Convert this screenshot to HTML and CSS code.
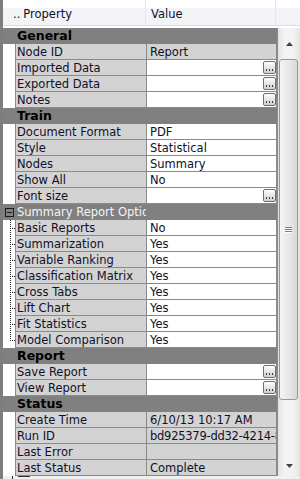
FILE: index.html
```html
<!DOCTYPE html>
<html>
<head>
<meta charset="utf-8">
<link rel="stylesheet" href="styles.css">
</head>
<body>
<div class="pg">
  <div class="header">
    <div class="hprop"><span class="hdots">..</span>Property</div>
    <div class="hval">Value</div>
    <div class="hcorner"></div>
  </div>
  <div class="body">
    <div class="rows">
      <div class="cat">General</div>
      <div class="row"><div class="ind"></div><div class="p">Node ID</div><div class="v ro">Report</div></div>
      <div class="row"><div class="ind"></div><div class="p">Imported Data</div><div class="v"><span class="val"></span><span class="btn"><svg width="11" height="11" viewBox="0 0 11 11"><rect x="2" y="7" width="1" height="2" fill="#1f3a7a"/><rect x="5" y="7" width="1" height="2" fill="#1f3a7a"/><rect x="8" y="7" width="1" height="2" fill="#1f3a7a"/></svg></span></div></div>
      <div class="row"><div class="ind"></div><div class="p">Exported Data</div><div class="v"><span class="val"></span><span class="btn"><svg width="11" height="11" viewBox="0 0 11 11"><rect x="2" y="7" width="1" height="2" fill="#1f3a7a"/><rect x="5" y="7" width="1" height="2" fill="#1f3a7a"/><rect x="8" y="7" width="1" height="2" fill="#1f3a7a"/></svg></span></div></div>
      <div class="row"><div class="ind"></div><div class="p">Notes</div><div class="v"><span class="val"></span><span class="btn"><svg width="11" height="11" viewBox="0 0 11 11"><rect x="2" y="7" width="1" height="2" fill="#1f3a7a"/><rect x="5" y="7" width="1" height="2" fill="#1f3a7a"/><rect x="8" y="7" width="1" height="2" fill="#1f3a7a"/></svg></span></div></div>
      <div class="cat">Train</div>
      <div class="row"><div class="ind"></div><div class="p">Document Format</div><div class="v">PDF</div></div>
      <div class="row"><div class="ind"></div><div class="p">Style</div><div class="v">Statistical</div></div>
      <div class="row"><div class="ind"></div><div class="p">Nodes</div><div class="v">Summary</div></div>
      <div class="row"><div class="ind"></div><div class="p">Show All</div><div class="v">No</div></div>
      <div class="row"><div class="ind"></div><div class="p">Font size</div><div class="v"><span class="val"></span><span class="btn"><svg width="11" height="11" viewBox="0 0 11 11"><rect x="2" y="7" width="1" height="2" fill="#1f3a7a"/><rect x="5" y="7" width="1" height="2" fill="#1f3a7a"/><rect x="8" y="7" width="1" height="2" fill="#1f3a7a"/></svg></span></div></div>
      <div class="subcat"><div class="ind"><svg class="box" width="9" height="9" viewBox="0 0 9 9"><rect x="0.5" y="0.5" width="8" height="8" fill="none" stroke="#1a1a1a"/><rect x="2" y="4" width="5" height="1" fill="#1a1a1a"/></svg></div><div class="p">Summary Report Options</div></div>
      <div class="row"><div class="ind tree"></div><div class="p">Basic Reports</div><div class="v">No</div></div>
      <div class="row"><div class="ind tree"></div><div class="p">Summarization</div><div class="v">Yes</div></div>
      <div class="row"><div class="ind tree"></div><div class="p">Variable Ranking</div><div class="v">Yes</div></div>
      <div class="row"><div class="ind tree"></div><div class="p">Classification Matrix</div><div class="v">Yes</div></div>
      <div class="row"><div class="ind tree"></div><div class="p">Cross Tabs</div><div class="v">Yes</div></div>
      <div class="row"><div class="ind tree"></div><div class="p">Lift Chart</div><div class="v">Yes</div></div>
      <div class="row"><div class="ind tree"></div><div class="p">Fit Statistics</div><div class="v">Yes</div></div>
      <div class="row"><div class="ind tree last"></div><div class="p">Model Comparison</div><div class="v">Yes</div></div>
      <div class="cat">Report</div>
      <div class="row"><div class="ind"></div><div class="p">Save Report</div><div class="v"><span class="val"></span><span class="btn"><svg width="11" height="11" viewBox="0 0 11 11"><rect x="2" y="7" width="1" height="2" fill="#1f3a7a"/><rect x="5" y="7" width="1" height="2" fill="#1f3a7a"/><rect x="8" y="7" width="1" height="2" fill="#1f3a7a"/></svg></span></div></div>
      <div class="row"><div class="ind"></div><div class="p">View Report</div><div class="v"><span class="val"></span><span class="btn"><svg width="11" height="11" viewBox="0 0 11 11"><rect x="2" y="7" width="1" height="2" fill="#1f3a7a"/><rect x="5" y="7" width="1" height="2" fill="#1f3a7a"/><rect x="8" y="7" width="1" height="2" fill="#1f3a7a"/></svg></span></div></div>
      <div class="cat">Status</div>
      <div class="row"><div class="ind"></div><div class="p">Create Time</div><div class="v ro">6/10/13 10:17 AM</div></div>
      <div class="row"><div class="ind"></div><div class="p">Run ID</div><div class="v ro"><span class="runid">bd925379-dd32-4214-8</span></div></div>
      <div class="row"><div class="ind"></div><div class="p">Last Error</div><div class="v ro"></div></div>
      <div class="row"><div class="ind"></div><div class="p">Last Status</div><div class="v ro">Complete</div></div>
    </div>
    <div class="vscroll">
      <div class="sb-up"><svg width="7" height="4" viewBox="0 0 7 4"><path d="M0 4 L3.5 0 L7 4 Z" fill="#404040"/></svg></div>
      <div class="thumb"><div class="grip"></div></div>
      <div class="track"></div>
      <div class="sb-down"><svg width="7" height="4" viewBox="0 0 7 4"><path d="M0 0 L3.5 4 L7 0 Z" fill="#404040"/></svg></div>
    </div>
  </div>
  <div class="foot"><span class="fplus"></span><span class="fbox"></span></div>
</div>
</body>
</html>
```
FILE: styles.css
```css
* { box-sizing: border-box; }
html, body { margin: 0; padding: 0; background: #fff; }
body {
  font-family: "DejaVu Sans", sans-serif;
  font-size: 11.5px;
  color: #10102a;
}
.pg {
  width: 300px;
  height: 479px;
  border-left: 3px solid #7d7d7d;
  display: flex;
  flex-direction: column;
  overflow: hidden;
  background: #f0f0f0;
}
.header {
  height: 28px;
  display: flex;
  background: linear-gradient(#ffffff 0, #ffffff 8px, #f2f4f7 8px, #f2f4f7 25px, #d8dde3 25px, #d8dde3 26px, #ffffff 26px);
}
.hprop {
  width: 143px;
  border-right: 1px solid #e2e5ea;
  height: 26px;
  padding-left: 10px;
  padding-top: 8px;
  line-height: 13px;
}
.hdots { margin-right: 3px; }
.hval {
  width: 130px;
  border-right: 1px solid #e2e5ea;
  height: 26px;
  padding-left: 5px;
  padding-top: 8px;
  line-height: 13px;
}
.hcorner { flex: 1; }
.body {
  display: flex;
  height: 448px;
}
.rows {
  width: 274px;
  display: flex;
  flex-direction: column;
  background: #fff;
}
.row {
  display: flex;
  height: 16px;
  flex: none;
}
.ind {
  width: 13px;
  height: 16px;
  background: #fff;
  border-right: 1px solid #8a8a8a;
  flex: none;
}
.ind.tree {
  background-color: #fff;
  background-image:
    repeating-linear-gradient(#222 0 1px, transparent 1px 2px),
    repeating-linear-gradient(90deg, #222 0 1px, transparent 1px 2px);
  background-size: 1px 16px, 5px 1px;
  background-position: 7px 0, 7px 8px;
  background-repeat: no-repeat;
}
.ind.tree.last {
  background-size: 1px 9px, 5px 1px;
}
.p {
  width: 131px;
  height: 16px;
  background: #d3d3d3;
  border-right: 1px solid #8a8a8a;
  border-bottom: 1px solid #8a8a8a;
  padding-left: 1px;
  padding-top: 2px;
  line-height: 12px;
  white-space: nowrap;
  overflow: hidden;
  flex: none;
}
.v {
  width: 130px;
  height: 16px;
  background: #fff;
  border-right: 1px solid #8a8a8a;
  border-bottom: 1px solid #8a8a8a;
  padding-left: 3px;
  padding-top: 2px;
  line-height: 12px;
  white-space: nowrap;
  overflow: hidden;
  display: flex;
  flex: none;
}
.v.ro { background: #d3d3d3; }
.runid { letter-spacing: -0.25px; }
.val { flex: 1; }
.btn {
  width: 13px;
  height: 13px;
  margin-top: -1px;
  border: 1px solid #707070;
  border-radius: 2px;
  background: linear-gradient(#ffffff, #e6e6e6 50%, #cfcfcf);
  display: flex;
  flex: none;
}
.cat {
  height: 16px;
  flex: none;
  background: #808080;
  font-weight: bold;
  color: #000;
  padding-left: 14px;
  padding-top: 2px;
  line-height: 12px;
  font-size: 12.5px;
}
.subcat {
  height: 16px;
  flex: none;
  display: flex;
  background: #808080;
  color: #f4f4f4;
}
.subcat .ind {
  background: #808080;
  border-right: none;
  padding-left: 2px;
  padding-top: 4px;
}
.subcat .ind .box { display: block; }
.subcat .p {
  background: none;
  border: none;
  padding-left: 1px;
  width: 130px;
}
.vscroll {
  width: 23px;
  display: flex;
  flex-direction: column;
  background: linear-gradient(90deg, #e3e3e3, #f3f3f3 30%, #f3f3f3 70%, #e3e3e3);
  border-left: 1px solid #8a8a8a;
}
.sb-up {
  height: 31px;
  display: flex;
  justify-content: center;
  align-items: center;
  flex: none;
}
.thumb {
  height: 341px;
  margin: 0 2px 0 1px;
  border: 1px solid #989898;
  border-radius: 3px;
  background: linear-gradient(90deg, #f5f5f5, #e9e9e9 50%, #d8d8d8);
  display: flex;
  justify-content: center;
  align-items: center;
  flex: none;
}
.grip {
  width: 7px;
  height: 6px;
  background: repeating-linear-gradient(#7a7a7a 0 1px, #fff 1px 2px);
}
.track { flex: 1; }
.sb-down {
  height: 20px;
  display: flex;
  justify-content: center;
  align-items: center;
  flex: none;
}
.foot {
  height: 3px;
  display: flex;
  background: #f0f0f0;
}
.fplus { width: 1px; height: 3px; margin-left: 9px; background: #333; }
.fbox { width: 12px; height: 1px; margin-left: 5px; background: #333; }
```
